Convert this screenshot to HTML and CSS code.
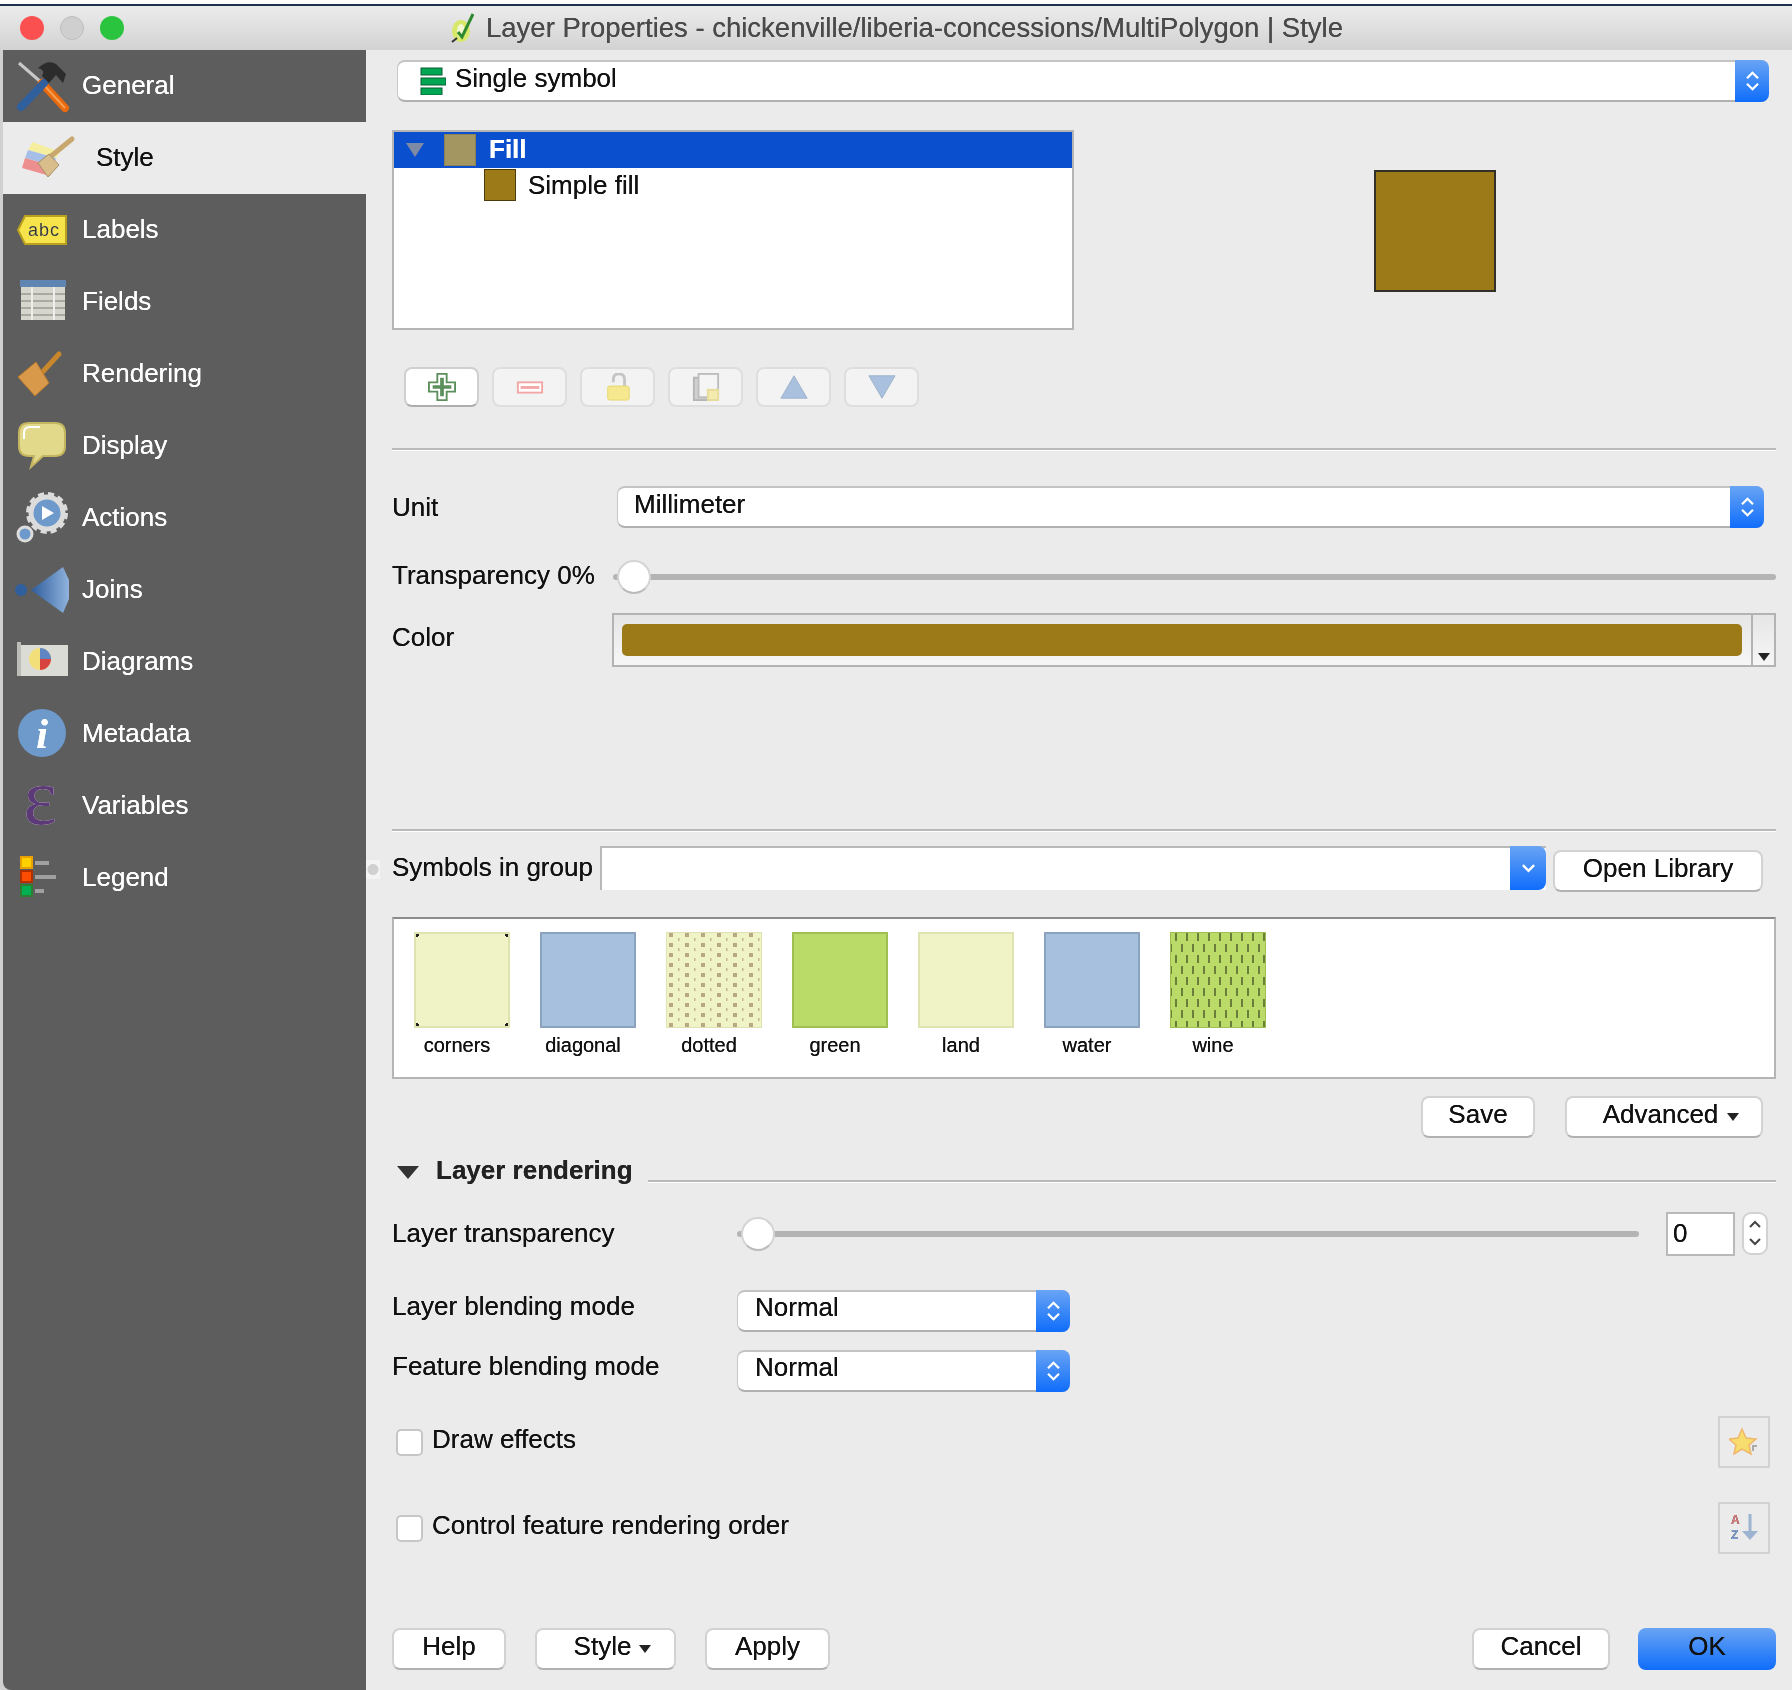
FILE: index.html
```html
<!DOCTYPE html>
<html lang="en">
<head>
  <meta charset="UTF-8" />
  <title>Layer Properties</title>
  <link rel="stylesheet" href="styles.css">
</head>
<body>
  <div class="window">
    <div class="titlebar">
      <div class="lights">
        <span class="light red"></span>
        <span class="light gray"></span>
        <span class="light green"></span>
      </div>
      <div class="title">
        <svg class="qgis" viewBox="0 0 26 32">
          <ellipse cx="12" cy="19" rx="9" ry="11" fill="#d8e86a"/>
          <ellipse cx="12" cy="19" rx="4" ry="7" fill="#f4f7d0"/>
          <path d="M9 20 L13 25 L24 2" fill="none" stroke="#2f8a2f" stroke-width="3"/>
          <path d="M3 30 L8 26" stroke="#333" stroke-width="2"/>
        </svg>
        <span>Layer Properties - chickenville/liberia-concessions/MultiPolygon | Style</span>
      </div>
      <div></div>
    </div>

    <div class="panes">
      <div class="sidebar">
        <div class="nav-item">
          <svg class="nav-icon" viewBox="0 0 56 56">
            <path d="M5 5 L28 25" stroke="#c8c8c8" stroke-width="3"/>
            <path d="M28 25 L51 50" stroke="#e8690f" stroke-width="8" stroke-linecap="round"/>
            <path d="M28 25 L51 50" stroke="#f6a04f" stroke-width="2"/>
            <path d="M7 49 L30 25" stroke="#2f5f9c" stroke-width="8" stroke-linecap="round"/>
            <path d="M24 10 Q34 1 42 6 L52 16 L49 25 L42 17 L35 25 L28 18 Q32 12 24 10 Z" fill="#2c2c2c"/>
          </svg>
          <span>General</span>
        </div>
        <div class="nav-item active">
          <svg class="nav-icon" viewBox="0 0 56 56">
            <polygon points="12.5,12 40,22 36,28 8,20" fill="#f5ee9f"/>
            <polygon points="8,20 36,28 33,36 5,28" fill="#a5bfe8"/>
            <polygon points="5,28 33,36 30,46 2,38" fill="#ee8f8f"/>
            <path d="M30 27 L52 9" stroke="#c9a870" stroke-width="5" stroke-linecap="round"/>
            <polygon points="18,33 29,24 39,35 28,47" fill="#d9bd8a" stroke="#a68f66"/>
          </svg>
          <span>Style</span>
        </div>
        <div class="nav-item">
          <svg class="nav-icon" viewBox="0 0 56 56">
            <polygon points="4,28 11,14 52,14 52,42 11,42" fill="#f7e34a" stroke="#b8a020" stroke-width="2"/>
            <text class="abc" x="14" y="34">abc</text>
          </svg>
          <span>Labels</span>
        </div>
        <div class="nav-item">
          <svg class="nav-icon" viewBox="0 0 56 56">
            <rect x="7" y="12" width="44" height="34" fill="#d6d6ce"/>
            <rect x="6" y="6" width="46" height="7" fill="#5f86b3"/>
            <path d="M7 20 H51 M7 27 H51 M7 34 H51 M7 41 H51" stroke="#a9a99f" stroke-width="2"/>
            <path d="M18 13 V46 M40 13 V46" stroke="#eeeeea" stroke-width="2"/>
          </svg>
          <span>Fields</span>
        </div>
        <div class="nav-item">
          <svg class="nav-icon" viewBox="0 0 56 56">
            <path d="M24 31 L45 8" stroke="#c8872d" stroke-width="5" stroke-linecap="round"/>
            <polygon points="4,31 22,16 35,37 21,50" fill="#d9994a" stroke="#b97a2a"/>
          </svg>
          <span>Rendering</span>
        </div>
        <div class="nav-item">
          <svg class="nav-icon" viewBox="0 0 56 56">
            <path d="M15 5 H41 Q51 5 51 15 V28 Q51 38 41 38 H29 L17 49 L20 38 H15 Q5 38 5 28 V15 Q5 5 15 5 Z" fill="#e3d98a" stroke="#c4b560" stroke-width="2"/>
            <path d="M10 21 V15 Q10 9 16 9 H26" fill="none" stroke="#fff" stroke-width="2"/>
          </svg>
          <span>Display</span>
        </div>
        <div class="nav-item">
          <svg class="nav-icon" viewBox="0 0 56 56">
            <circle cx="33" cy="23" r="16" fill="#6d9acb" stroke="#dcdcdc" stroke-width="5"/>
            <circle cx="33" cy="23" r="19" fill="none" stroke="#dcdcdc" stroke-width="4" stroke-dasharray="6 4"/>
            <polygon points="28,16 40,23 28,30" fill="#fff"/>
            <circle cx="11" cy="44" r="7" fill="#6d9acb" stroke="#dcdcdc" stroke-width="3"/>
          </svg>
          <span>Actions</span>
        </div>
        <div class="nav-item">
          <svg class="nav-icon" viewBox="0 0 56 56">
            <defs>
              <linearGradient id="joinFill" x1="0" x2="1" y1="0" y2="0">
                <stop offset="0" stop-color="#2e5c9c"/>
                <stop offset="1" stop-color="#8fb3dc"/>
              </linearGradient>
            </defs>
            <circle cx="7" cy="28" r="6" fill="#2f5f9c"/>
            <polygon points="17,28 49,5 55,18 55,37 49,51" fill="url(#joinFill)"/>
          </svg>
          <span>Joins</span>
        </div>
        <div class="nav-item">
          <svg class="nav-icon" viewBox="0 0 56 56">
            <rect x="3" y="11" width="51" height="31" fill="#dcdcd6"/>
            <rect x="3" y="8" width="4" height="34" fill="#bdbdb8"/>
            <circle cx="26" cy="25" r="11" fill="#f3df7a"/>
            <path d="M26 25 L26 14 A11 11 0 0 1 37 25 Z" fill="#5f86c3"/>
            <path d="M26 25 L37 25 A11 11 0 0 1 26 36 Z" fill="#d9433f"/>
          </svg>
          <span>Diagrams</span>
        </div>
        <div class="nav-item">
          <svg class="nav-icon" viewBox="0 0 56 56">
            <circle cx="28" cy="27" r="24" fill="#6d9acb"/>
            <text class="info" x="28" y="42">i</text>
          </svg>
          <span>Metadata</span>
        </div>
        <div class="nav-item">
          <svg class="nav-icon" viewBox="0 0 56 56">
            <text class="epsilon" x="26" y="46">&#949;</text>
          </svg>
          <span>Variables</span>
        </div>
        <div class="nav-item">
          <svg class="nav-icon" viewBox="0 0 56 56">
            <rect x="7" y="7" width="11" height="11" fill="#ffd000" stroke="#e8a000" stroke-width="2"/>
            <rect x="7" y="21" width="11" height="11" fill="#ff4d00" stroke="#b03000" stroke-width="2"/>
            <rect x="7" y="35" width="11" height="11" fill="#00b050" stroke="#2e7d32" stroke-width="2"/>
            <path d="M21 13 H35 M21 27 H42 M21 41 H30" stroke="#a0a0a0" stroke-width="4"/>
          </svg>
          <span>Legend</span>
        </div>
      </div>

      <div class="main">
        <!-- symbol type -->
        <div class="combo type-combo">
          <svg class="type-icon" viewBox="0 0 26 28">
            <rect x="1" y="1" width="21" height="7" fill="#00a651" stroke="#0b5e36"/>
            <rect x="1" y="11" width="25" height="7" fill="#00a651" stroke="#0b5e36"/>
            <rect x="1" y="21" width="21" height="7" fill="#00a651" stroke="#0b5e36"/>
          </svg>
          <span class="combo-text">Single symbol</span>
          <span class="combo-arrow">
            <svg class="updown" viewBox="0 0 16 24"><path d="M2 9 L8 3 L14 9 M2 15 L8 21 L14 15"/></svg>
          </span>
        </div>

        <div class="tree-row">
          <div class="tree">
            <div class="tree-sel">
              <span class="tree-tri"></span>
              <span class="tree-swatch dim"></span>
              <span class="tree-fill">Fill</span>
            </div>
            <div class="tree-child">
              <span class="tree-swatch"></span>
              <span>Simple fill</span>
            </div>
          </div>
          <div class="preview"></div>
        </div>

        <div class="toolbar">
          <div class="tool on">
            <svg viewBox="0 0 30 30">
              <polygon points="10,1 20,1 20,10 29,10 29,20 20,20 20,29 10,29 10,20 1,20 1,10 10,10" fill="#fff" stroke="#5b8f5b" stroke-width="2"/>
              <path d="M15 5 V25 M5 15 H25" stroke="#5b8f5b" stroke-width="4"/>
            </svg>
          </div>
          <div class="tool">
            <svg viewBox="0 0 30 30">
              <rect x="2" y="10" width="26" height="11" fill="#fff" stroke="#f2a6a6" stroke-width="2"/>
              <path d="M5 15.500 H25" stroke="#f2a6a6" stroke-width="3"/>
            </svg>
          </div>
          <div class="tool">
            <svg viewBox="0 0 30 30">
              <path d="M10 10 V7 Q10 1 16 1 Q22 1 22 7 V15" fill="none" stroke="#c4c4c4" stroke-width="3"/>
              <rect x="4" y="14" width="23" height="15" rx="2" fill="#f5e88e" stroke="#e6d670"/>
            </svg>
          </div>
          <div class="tool">
            <svg viewBox="0 0 30 30">
              <rect x="2" y="5" width="20" height="24" fill="#d0d0d0" stroke="#b5b5b5" stroke-width="2"/>
              <rect x="7" y="1" width="21" height="25" fill="#f5f5f5" stroke="#bdbdbd" stroke-width="2"/>
              <rect x="17" y="18" width="11" height="11" fill="#f3eaae" stroke="#e5dc9c" stroke-width="2"/>
            </svg>
          </div>
          <div class="tool">
            <svg viewBox="0 0 30 30">
              <polygon points="15,3 29,27 1,27" fill="#a9c0de" stroke="#9cb0c9"/>
            </svg>
          </div>
          <div class="tool">
            <svg viewBox="0 0 30 30">
              <polygon points="1,3 29,3 15,27" fill="#a9c0de" stroke="#9cb0c9"/>
            </svg>
          </div>
        </div>

        <div class="sep sep-a"></div>

        <div class="form-row unit-row">
          <label class="label-wide">Unit</label>
          <div class="combo unit-combo">
            <span class="combo-text">Millimeter</span>
            <span class="combo-arrow">
              <svg class="updown" viewBox="0 0 16 24"><path d="M2 9 L8 3 L14 9 M2 15 L8 21 L14 15"/></svg>
            </span>
          </div>
        </div>

        <div class="form-row trans-row">
          <label class="label-trans">Transparency 0%</label>
          <div class="slider"><span class="knob"></span></div>
        </div>

        <div class="form-row color-row">
          <label class="label-color">Color</label>
          <div class="color-btn">
            <div class="color-body"><div class="color-fill"></div></div>
            <div class="color-drop"><span class="mini-tri"></span></div>
          </div>
        </div>

        <div class="sep sep-b"></div>

        <div class="form-row group-row">
          <span class="radio-stub"></span>
          <label class="label-group">Symbols in group</label>
          <div class="group-combo">
            <span class="group-blue">
              <svg class="chev" viewBox="0 0 16 10"><path d="M2 2 L8 8 L14 2"/></svg>
            </span>
          </div>
          <div class="btn open-lib">Open Library</div>
        </div>

        <div class="symbols">
          <div class="sym">
            <div class="sw sw-land sw-corners"></div>
            <span class="sym-name">corners</span>
          </div>
          <div class="sym">
            <div class="sw sw-water"></div>
            <span class="sym-name">diagonal</span>
          </div>
          <div class="sym">
            <svg class="sw-svg" viewBox="0 0 96 96">
              <defs>
                <pattern id="dots" width="16" height="10" patternUnits="userSpaceOnUse">
                  <rect x="3" y="1" width="4" height="4" fill="#b7a883"/>
                  <rect x="12" y="6" width="1.500" height="3" fill="#c4b690"/>
                </pattern>
              </defs>
              <rect width="96" height="96" fill="#eff3c6"/>
              <rect width="96" height="96" fill="url(#dots)" stroke="#dfe3b0" stroke-width="2"/>
            </svg>
            <span class="sym-name">dotted</span>
          </div>
          <div class="sym">
            <div class="sw sw-green"></div>
            <span class="sym-name">green</span>
          </div>
          <div class="sym">
            <div class="sw sw-land"></div>
            <span class="sym-name">land</span>
          </div>
          <div class="sym">
            <div class="sw sw-water"></div>
            <span class="sym-name">water</span>
          </div>
          <div class="sym">
            <svg class="sw-svg" viewBox="0 0 96 96">
              <defs>
                <pattern id="ticks" width="11" height="22" patternUnits="userSpaceOnUse">
                  <rect x="5" y="1" width="2" height="8" fill="#6b7d3a"/>
                  <rect x="0" y="12" width="2" height="8" fill="#6b7d3a"/>
                </pattern>
              </defs>
              <rect width="96" height="96" fill="#bbdb69"/>
              <rect width="96" height="96" fill="url(#ticks)" stroke="#9fbf50" stroke-width="2"/>
            </svg>
            <span class="sym-name">wine</span>
          </div>
        </div>

        <div class="save-row">
          <div class="btn save-btn">Save</div>
          <div class="btn adv-btn">Advanced<span class="mini-tri"></span></div>
        </div>

        <div class="group-head">
          <span class="head-tri"></span>
          <span class="head-text">Layer rendering</span>
          <span class="head-line"></span>
        </div>

        <div class="form-row layer-trans">
          <label class="label-layer">Layer transparency</label>
          <div class="slider short"><span class="knob"></span></div>
          <div class="spin-box">0</div>
          <div class="spinner">
            <svg viewBox="0 0 16 32"><path d="M3 10 L8 5 L13 10 M3 22 L8 27 L13 22"/></svg>
          </div>
        </div>

        <div class="form-row blend blend-a">
          <label class="label-layer">Layer blending mode</label>
          <div class="combo blend-combo">
            <span class="combo-text">Normal</span>
            <span class="combo-arrow">
              <svg class="updown" viewBox="0 0 16 24"><path d="M2 9 L8 3 L14 9 M2 15 L8 21 L14 15"/></svg>
            </span>
          </div>
        </div>
        <div class="form-row blend blend-b">
          <label class="label-layer">Feature blending mode</label>
          <div class="combo blend-combo">
            <span class="combo-text">Normal</span>
            <span class="combo-arrow">
              <svg class="updown" viewBox="0 0 16 24"><path d="M2 9 L8 3 L14 9 M2 15 L8 21 L14 15"/></svg>
            </span>
          </div>
        </div>

        <div class="check-row check-a">
          <span class="check"></span>
          <span class="check-text">Draw effects</span>
          <div class="icon-btn">
            <svg viewBox="0 0 30 30">
              <polygon points="13,2 17,11 27,12 20,18 22,27 13,22 5,27 7,18 0,12 9,11" fill="#f7dd6e" stroke="#f0b66a" stroke-width="1.500"/>
              <path d="M24 24 V19 H28" fill="none" stroke="#aaa" stroke-width="2"/>
            </svg>
          </div>
        </div>
        <div class="check-row check-b">
          <span class="check"></span>
          <span class="check-text">Control feature rendering order</span>
          <div class="icon-btn">
            <svg viewBox="0 0 30 30">
              <text class="az-a" x="2" y="11">A</text>
              <text class="az-z" x="2" y="26">Z</text>
              <path d="M21 1 V22" stroke="#9db4d0" stroke-width="3"/>
              <polygon points="13,18 29,18 21,27" fill="#9db4d0"/>
            </svg>
          </div>
        </div>

        <div class="footer">
          <div class="btn help-btn">Help</div>
          <div class="btn style-btn">Style<span class="mini-tri"></span></div>
          <div class="btn apply-btn">Apply</div>
          <div class="btn cancel-btn">Cancel</div>
          <div class="btn ok-btn">OK</div>
        </div>
      </div>
    </div>
  </div>
</body>
</html>
```

FILE: styles.css
```css
html, body {
  margin: 0;
  padding: 0;
  height: 1690px;
  overflow: hidden;
  background: #fff;
}

body {
  font-family: "Liberation Sans", Arial, sans-serif;
  font-size: 26px;
  color: #111;
  text-shadow: 0 0 0.6px currentColor;
}

.window {
  padding-top: 4px;
  filter: blur(0.45px);
}

/* title bar */
.titlebar {
  display: grid;
  grid-template-columns: 1fr auto 1fr;
  align-items: center;
  height: 44px;
  border-top: 2px solid #1f3350;
  background: linear-gradient(to bottom, #ececec, #d2d2d2);
}

.lights {
  display: flex;
  gap: 16px;
  padding-left: 20px;
}

.light {
  width: 24px;
  height: 24px;
  border-radius: 50%;
}

.light.red { background: #fb5050; }
.light.gray { background: #cfcfcf; border: 1px solid #bdbdbd; box-sizing: border-box; }
.light.green { background: #2bc43f; }

.title {
  display: flex;
  align-items: center;
  gap: 11px;
  font-size: 27.500px;
  color: #4a4a4a;
}

.qgis {
  width: 26px;
  height: 32px;
}

.panes {
  display: flex;
  height: 1640px;
  background: #d0d0d0;
  padding-left: 3px;
}

/* left list */
.sidebar {
  width: 363px;
  flex: none;
  background: #5d5d5d;
  border-bottom-left-radius: 8px;
}

.nav-item {
  display: flex;
  align-items: center;
  height: 72px;
  padding-left: 11px;
  gap: 12px;
  color: #fff;
}

.nav-item span {
  padding-bottom: 2px;
}

.nav-item.active {
  background: #ebebeb;
  color: #111;
  padding-left: 17px;
  gap: 20px;
}

.nav-icon {
  width: 56px;
  height: 56px;
  flex: none;
  overflow: visible;
}

.abc {
  font-size: 18px;
  letter-spacing: 1px;
  fill: #3a3a2a;
}

.info {
  font-family: "Liberation Serif", serif;
  font-size: 42px;
  font-weight: bold;
  font-style: italic;
  text-anchor: middle;
  fill: #fff;
}

.epsilon {
  font-family: "Liberation Serif", serif;
  font-size: 80px;
  text-anchor: middle;
  fill: #5c3a78;
}

/* right side */
.main {
  flex: 1;
  background: #ebebeb;
  padding: 0 16px 0 26px;
  min-width: 0;
}

.combo {
  display: flex;
  align-items: center;
  box-sizing: border-box;
  background: #fff;
  border-radius: 8px;
  border-top: 2px solid #c3c3c3;
  border-bottom: 2px solid #b0b0b0;
  border-left: 1px solid #c8c8c8;
  height: 42px;
}

.combo-text {
  flex: 1;
  padding-bottom: 6px;
}

.combo-arrow {
  display: flex;
  align-items: center;
  justify-content: center;
  align-self: stretch;
  margin: -2px 0;
  width: 34px;
  flex: none;
  border-radius: 0 8px 8px 0;
  background: linear-gradient(to bottom, #69a4f4, #0f6dfb);
}

.updown {
  width: 15px;
  height: 22px;
  fill: none;
  stroke: #fff;
  stroke-width: 2.5;
}

.type-combo {
  margin: 10px 7px 0 5px;
}

.type-icon {
  width: 26px;
  height: 28px;
  margin: 0 9px 0 22px;
}

.tree-row {
  display: flex;
  align-items: flex-start;
  margin-top: 28px;
}

.tree {
  box-sizing: border-box;
  width: 682px;
  height: 200px;
  background: #fff;
  border: 2px solid #b5b5b5;
}

.tree-sel {
  display: flex;
  align-items: center;
  height: 36px;
  background: #0a50ce;
  color: #fff;
  font-weight: bold;
}

.tree-tri {
  width: 0;
  height: 0;
  margin-left: 12px;
  border-left: 9px solid transparent;
  border-right: 9px solid transparent;
  border-top: 14px solid #7f8aa5;
}

.tree-swatch {
  box-sizing: border-box;
  width: 32px;
  height: 32px;
  background: #9b7a17;
  border: 1px solid #4b3b0c;
}

.tree-swatch.dim {
  margin-left: 20px;
  background: #a39660;
  border-color: #8b8258;
}

.tree-fill {
  margin-left: 13px;
  padding-bottom: 2px;
}

.tree-child {
  display: flex;
  align-items: center;
  gap: 12px;
  height: 34px;
  padding-left: 90px;
}

.preview {
  box-sizing: border-box;
  width: 122px;
  height: 122px;
  margin: 40px 0 0 300px;
  background: #9b7a17;
  border: 2px solid #33302a;
}

.toolbar {
  display: flex;
  gap: 13px;
  margin: 37px 0 0 12px;
}

.tool {
  display: flex;
  align-items: center;
  justify-content: center;
  box-sizing: border-box;
  width: 75px;
  height: 40px;
  background: #f3f3f3;
  border: 2px solid #dedede;
  border-radius: 8px;
}

.tool.on {
  background: #fff;
  border-color: #cfcfcf #cfcfcf #aeaeae;
}

.tool svg {
  width: 28px;
  height: 28px;
}

.sep {
  height: 2px;
  background: #b9b9b9;
  border-bottom: 1px solid #fff;
}

.sep-a { margin-top: 41px; }
.sep-b { margin-top: 162px; }

.form-row {
  display: flex;
  align-items: center;
  position: relative;
}

.unit-row { margin-top: 35px; }
.label-wide { width: 225px; flex: none; }

.unit-combo {
  flex: 1;
  margin-right: 12px;
}

.unit-combo .combo-text { padding-left: 16px; }

.trans-row {
  height: 32px;
  margin-top: 33px;
}

.label-trans { width: 221px; flex: none; padding-bottom: 4px; }

.slider {
  position: relative;
  flex: 1;
  height: 6px;
  background: #b4b4b4;
  border-radius: 3px;
}

.knob {
  position: absolute;
  left: 4px;
  top: -14px;
  box-sizing: border-box;
  width: 34px;
  height: 34px;
  background: #fff;
  border: 2px solid #d4d4d4;
  border-bottom-color: #bbb;
  border-radius: 50%;
}

.color-row {
  height: 54px;
  margin-top: 20px;
}

.label-color { width: 220px; flex: none; padding-bottom: 6px; }

.color-btn {
  flex: 1;
  display: flex;
  box-sizing: border-box;
  height: 54px;
  border: 2px solid #b3b3b3;
  background: linear-gradient(to bottom, #e6e6e6, #f6f6f6);
}

.color-body {
  flex: 1;
  padding: 9px 9px 9px 8px;
}

.color-fill {
  height: 32px;
  background: #9b7a17;
  border-radius: 5px;
}

.color-drop {
  display: flex;
  align-items: flex-end;
  justify-content: center;
  width: 21px;
  border-left: 2px solid #b3b3b3;
  padding-bottom: 4px;
}

.mini-tri {
  display: inline-block;
  width: 0;
  height: 0;
  border-left: 6px solid transparent;
  border-right: 6px solid transparent;
  border-top: 8px solid #222;
}

.group-row {
  height: 46px;
  margin-top: 14px;
}

.radio-stub {
  position: absolute;
  left: -26px;
  top: 14px;
  width: 14px;
  height: 19px;
  background: radial-gradient(circle at 50% 50%, #d0d0d0 5px, #f4f4f4 6px);
}

.label-group {
  width: 208px;
  flex: none;
  padding-bottom: 4px;
}

.group-combo {
  display: flex;
  justify-content: flex-end;
  box-sizing: border-box;
  width: 946px;
  height: 44px;
  align-self: flex-start;
  background: #fff;
  border-top: 2px solid #b9b9b9;
  border-left: 2px solid #b9b9b9;
}

.group-blue {
  display: flex;
  align-items: center;
  justify-content: center;
  width: 36px;
  margin-top: -2px;
  border-radius: 0 8px 8px 0;
  background: linear-gradient(to bottom, #69a4f4, #0f6dfb);
}

.chev {
  width: 15px;
  height: 10px;
  fill: none;
  stroke: #fff;
  stroke-width: 2.5;
}

.btn {
  display: flex;
  align-items: center;
  justify-content: center;
  box-sizing: border-box;
  height: 42px;
  padding-bottom: 6px;
  background: #fff;
  border: 2px solid #d2d2d2;
  border-bottom-color: #b2b2b2;
  border-radius: 8px;
}

.open-lib {
  width: 210px;
  margin-left: 7px;
  align-self: flex-end;
}

.symbols {
  display: flex;
  gap: 30px;
  box-sizing: border-box;
  height: 162px;
  margin-top: 25px;
  padding: 13px 0 0 20px;
  background: #fff;
  border: 2px solid #b5b5b5;
  border-top-color: #8c8c8c;
}

.sym {
  display: flex;
  flex-direction: column;
  width: 96px;
}

.sw {
  box-sizing: border-box;
  width: 96px;
  height: 96px;
  border: 2px solid;
}

.sw-svg {
  display: block;
  width: 96px;
  height: 96px;
}

.sw-land { background-color: #eff3c6; border-color: #dfe3b0; }
.sw-water { background-color: #a7c0de; border-color: #8aa3bf; }
.sw-green { background-color: #bbdb69; border-color: #9fbf50; }

.sw-corners {
  background-image:
    radial-gradient(circle at 0 0, #222 3px, transparent 3.500px),
    radial-gradient(circle at 100% 0, #222 3px, transparent 3.500px),
    radial-gradient(circle at 0 100%, #222 3px, transparent 3.500px),
    radial-gradient(circle at 100% 100%, #222 3px, transparent 3.500px);
}

.sym-name {
  width: 86px;
  margin-top: 5px;
  font-size: 20px;
  line-height: 24px;
  text-align: center;
}

.save-row {
  display: flex;
  margin-top: 17px;
}

.save-btn { width: 114px; margin-left: 1029px; }
.adv-btn { width: 198px; margin-left: 30px; gap: 9px; padding-left: 14px; }
.btn .mini-tri { margin-top: 6px; }

.group-head {
  display: flex;
  align-items: center;
  height: 30px;
  margin-top: 17px;
}

.head-tri {
  width: 0;
  height: 0;
  margin-left: 5px;
  border-left: 11px solid transparent;
  border-right: 11px solid transparent;
  border-top: 13px solid #333;
  position: relative;
  top: 2px;
}

.head-text {
  margin-left: 17px;
  font-weight: bold;
  color: #222;
}

.head-line {
  flex: 1;
  height: 2px;
  margin: 22px 0 0 15px;
  background: #b9b9b9;
  border-bottom: 1px solid #fff;
}

.label-layer { width: 345px; flex: none; padding-bottom: 9px; }

.layer-trans {
  height: 45px;
  margin-top: 26px;
}

.layer-trans .label-layer { padding-bottom: 0; }

.slider.short {
  flex: none;
  width: 902px;
}

.spin-box {
  box-sizing: border-box;
  width: 69px;
  height: 44px;
  margin-left: 27px;
  padding-left: 5px;
  line-height: 38px;
  background: #fff;
  border: 2px solid #b9b9b9;
}

.spinner {
  box-sizing: border-box;
  width: 26px;
  height: 43px;
  margin-left: 7px;
  background: #fff;
  border: 2px solid #d2d2d2;
  border-radius: 9px;
}

.spinner svg {
  display: block;
  width: 16px;
  height: 32px;
  margin: 3px auto 0;
  fill: none;
  stroke: #444;
  stroke-width: 2;
}

.blend-a { margin-top: 34px; }
.blend-b { margin-top: 18px; }

.blend-combo { width: 333px; }
.blend-combo .combo-text { padding-left: 17px; padding-bottom: 8px; }

.check-row {
  display: flex;
  align-items: center;
  height: 52px;
  padding-left: 4px;
}

.check-a { margin-top: 24px; }
.check-b { margin-top: 34px; }

.check {
  box-sizing: border-box;
  width: 27px;
  height: 27px;
  background: #fff;
  border: 2px solid #c6c6c6;
  border-radius: 5px;
}

.check-text {
  flex: 1;
  margin-left: 9px;
  padding-bottom: 6px;
}

.icon-btn {
  display: flex;
  align-items: center;
  justify-content: center;
  box-sizing: border-box;
  width: 52px;
  height: 52px;
  margin-right: 6px;
  border: 2px solid #d2d2d2;
}

.icon-btn svg {
  width: 30px;
  height: 30px;
}

.az-a, .az-z {
  font-size: 12px;
  font-weight: bold;
}

.az-a { fill: #dd7a7a; }
.az-z { fill: #7d9fd4; }

.footer {
  display: flex;
  margin-top: 74px;
}

.help-btn { width: 114px; }
.style-btn { width: 141px; margin-left: 29px; gap: 8px; padding-left: 14px; }
.apply-btn { width: 125px; margin-left: 29px; }
.cancel-btn { width: 138px; margin-left: 642px; }

.ok-btn {
  width: 138px;
  margin-left: 28px;
  border: none;
  background: linear-gradient(to bottom, #69a4f4, #0f6dfb);
}
```
